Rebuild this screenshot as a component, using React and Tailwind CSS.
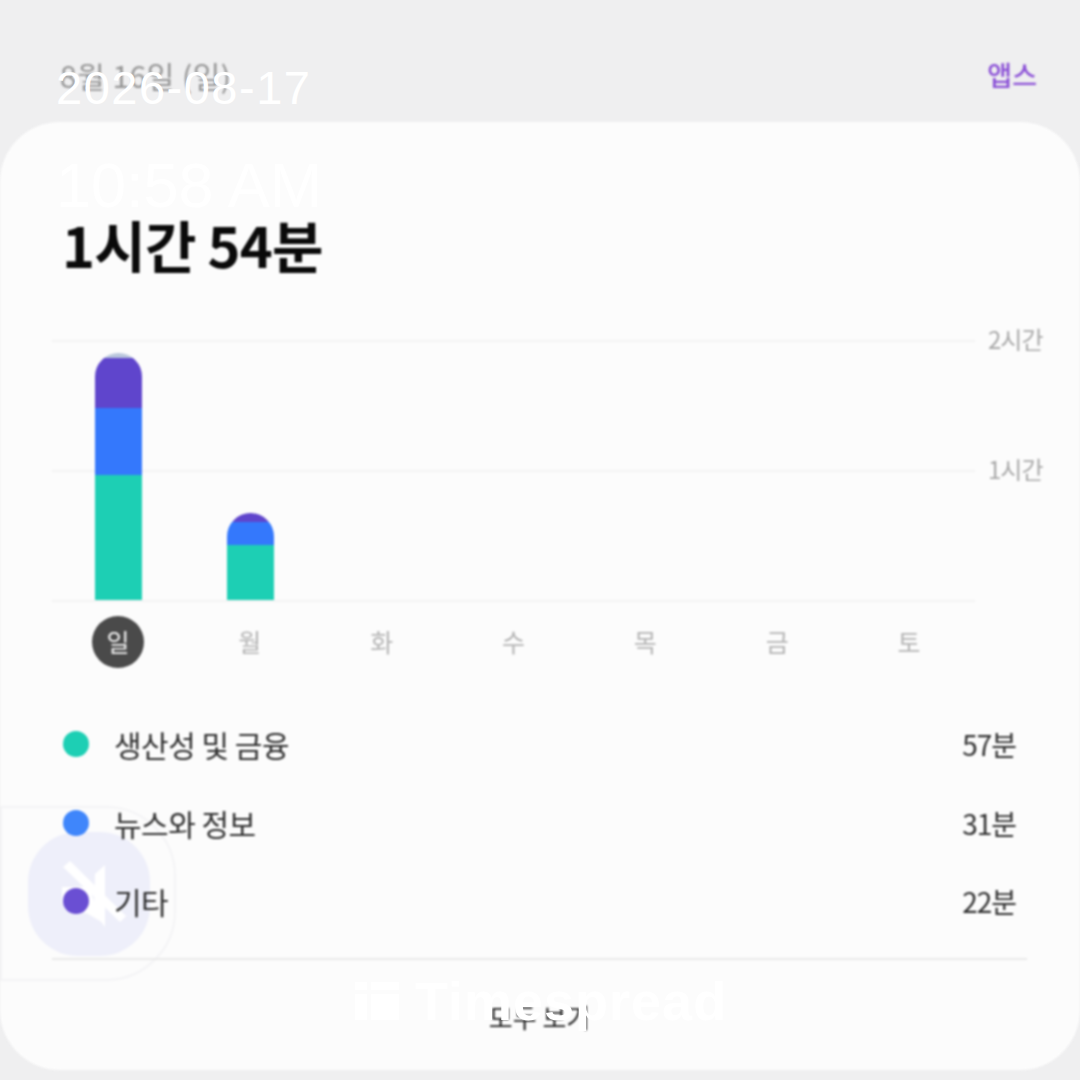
const font = { fontFamily: '"Noto Sans CJK KR", "Noto Sans", sans-serif' };
const latin = { fontFamily: '"Liberation Sans", sans-serif' };

const days = ['일', '월', '화', '수', '목', '금', '토'];

const bars = [
  [
    { h: 'h-[5px]', c: 'bg-[#b9c6dc]' },
    { h: 'h-[50px]', c: 'bg-[#5f45cc]' },
    { h: 'h-[67px]', c: 'bg-[#3478fc]' },
    { h: 'h-[125px]', c: 'bg-[#1dcfb4]' },
  ],
  [
    { h: 'h-[9px]', c: 'bg-[#5f45cc]' },
    { h: 'h-[23px]', c: 'bg-[#3478fc]' },
    { h: 'h-[55px]', c: 'bg-[#1dcfb4]' },
  ],
  [], [], [], [], [],
];

const legend = [
  { color: 'bg-[#1dcfb4]', title: '생산성 및 금융', time: '57분' },
  { color: 'bg-[#3f86fb]', title: '뉴스와 정보', time: '31분' },
  { color: 'bg-[#6a4fd3]', title: '기타', time: '22분' },
];

function GridRow({ label }) {
  return (
    <div className="flex h-[130px] items-start">
      <div className="h-[2px] w-[923px] shrink-0 bg-[#f3f3f3]" />
      <span className="ml-[13px] -mt-[16px] whitespace-nowrap text-[24px] leading-[30px] tracking-[-1px] text-[#a8a8a8]">{label}</span>
    </div>
  );
}

export default function App() {
  return (
    <div style={font} className="relative h-[1080px] w-[1080px] overflow-hidden bg-[#efeff0]">
      <div className="blur-[1px]">
        <header className="flex h-[122px] items-start justify-between pl-[60px] pr-[43px] pt-[55px]">
          <span className="text-[30px] leading-[40px] tracking-[0.5px] text-[#959595]">8월 16일 (일)</span>
          <span className="text-[27px] leading-[40px] font-medium text-[#8a4fd6]">앱스</span>
        </header>

        <main className="relative h-[948px] rounded-[60px] bg-[#fcfcfc] pl-[52px] pr-[53px]">
          {/* floating app button behind the list */}
          <div className="absolute left-0 top-[684px] h-[175px] w-[176px] rounded-r-[70px] border-2 border-[#f4f4f6]">
            <div className="absolute left-[26px] top-[24px] h-[124px] w-[122px] rounded-[50px] bg-[#eeeffa]" />
            <svg className="absolute left-[48px] top-[46px]" width="80" height="78" viewBox="0 0 80 78" fill="#fff">
              <path d="M13 13 L20 7 L76 62 L70 68 Z" />
              <path d="M45 20 L55 11 L55 73 L44 58 Z" />
              <path d="M12 33 L38 33 L55 70 L38 60 L12 50 Z" />
            </svg>
          </div>

          <div className="relative">
            <h1 className="pl-[10px] pt-[84px] text-[56px] leading-[76px] font-bold tracking-[-0.8px] text-[#0a0a0a]">1시간 54분</h1>

            <section className="relative mt-[58px] h-[262px]">
              <GridRow label="2시간" />
              <GridRow label="1시간" />
              <div className="h-[2px] w-[923px] bg-[#f3f3f3]" />
              <div className="absolute bottom-[2px] left-[1px] flex h-[260px] w-[923px] items-end">
                {bars.map((segments, i) => (
                  <div key={i} className="flex flex-1 justify-center">
                    <div className="w-[47px] overflow-hidden rounded-t-[24px]">
                      {segments.map((s, j) => (
                        <div key={j} className={`${s.h} ${s.c}`} />
                      ))}
                    </div>
                  </div>
                ))}
              </div>
            </section>

            <div className="mt-[14px] flex w-[923px]">
              {days.map((d, i) => (
                <div key={d} className="flex flex-1 justify-center">
                  <span className={i === 0
                    ? 'flex h-[52px] w-[52px] items-center justify-center rounded-full bg-[#4a4a4a] text-[25px] text-[#f2f2f2]'
                    : 'flex h-[52px] w-[52px] items-center justify-center text-[25px] text-[#b4b4b4]'}>{d}</span>
                </div>
              ))}
            </div>

            <ul className="mt-[56px] flex flex-col gap-[38.5px] px-[11px]">
              {legend.map((row) => (
                <li key={row.title} className="flex h-[40px] items-center justify-between">
                  <div className="flex items-center gap-[25px]">
                    <span className={`h-[26px] w-[26px] rounded-full ${row.color}`} />
                    <span className="text-[30px] leading-[40px] tracking-[-0.5px] text-[#2f2f2f]">{row.title}</span>
                  </div>
                  <span className="text-[28px] leading-[40px] tracking-[-1px] text-[#2f2f2f]">{row.time}</span>
                </li>
              ))}
            </ul>

            <div className="mt-[37px] h-[2px] bg-[#e9e9e9]" />
            <div className="pt-[37px] text-center text-[26px] leading-[40px] text-[#1c1c1c]">모두 보기</div>
          </div>
        </main>
      </div>

      {/* stamp + watermark laid over the screenshot */}
      <div style={latin} className="absolute left-[56px] top-[60px] text-[47px] leading-[56px] tracking-[1.5px] text-white">2026-08-17</div>
      <div style={latin} className="absolute left-[56px] top-[152px] text-[63px] leading-[66px] text-white">10:58 AM</div>

      <div style={latin} className="absolute left-[355px] top-[970px] flex items-center gap-[16px] text-[54px] leading-[62px] font-bold tracking-[1px] text-white">
        <svg width="44" height="42" viewBox="0 0 44 42" fill="#fff">
          <rect x="0" y="2" width="12" height="8" />
          <rect x="0" y="14" width="12" height="26" />
          <rect x="16" y="2" width="28" height="8" />
          <rect x="16" y="14" width="28" height="26" />
        </svg>
        Timespread
      </div>
    </div>
  );
}
